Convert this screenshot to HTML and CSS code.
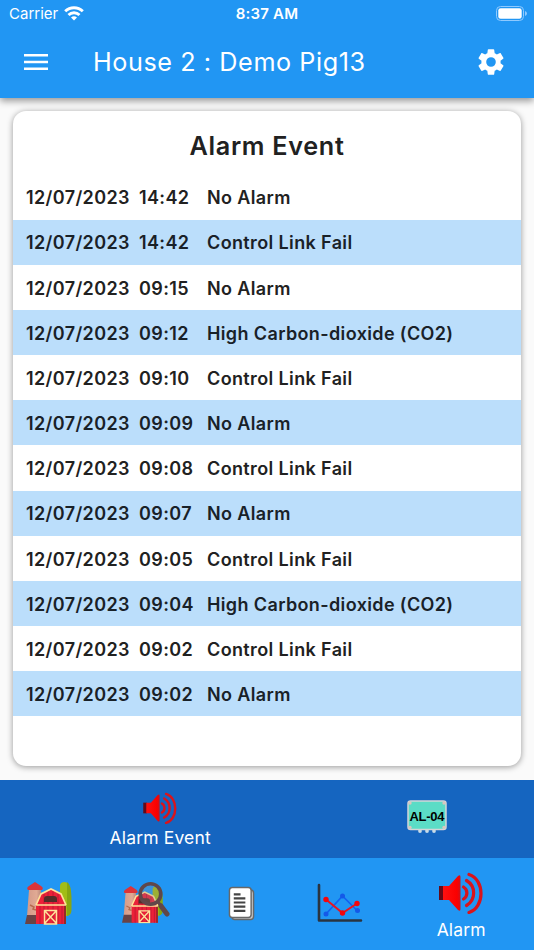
FILE: index.html
```html
<!DOCTYPE html>
<html lang="en">

<head>
    <meta charset="UTF-8">
    <title>Alarm Event</title>
    <link rel="stylesheet" href="styles.css">
</head>

<body>
    <!-- shared drawings -->
    <svg class="defs" width="0" height="0">
        <defs>
            <linearGradient id="red" x1="0" y1="0" x2="1" y2="0">
                <stop offset="0" stop-color="#ff1010" />
                <stop offset="0.8" stop-color="#fa0000" />
                <stop offset="1" stop-color="#d0101a" />
            </linearGradient>
            <linearGradient id="silo" x1="0" y1="0" x2="1" y2="0">
                <stop offset="0" stop-color="#d49a88" />
                <stop offset="0.6" stop-color="#e0aa94" />
                <stop offset="1" stop-color="#a87870" />
            </linearGradient>
            <symbol id="speaker" viewBox="0 0 44 42">
                <path d="M0 14h5v14H0z" fill="#650a18" />
                <path d="M4 14h6L19 4q2.500-2 2.500 1v32q0 3-2.500 1l-9-10H4z" fill="url(#red)" />
                <g fill="none" stroke="#d9141c" stroke-width="3.200" stroke-linecap="round">
                    <path d="M24.500 15a7 7 0 0 1 0 12" />
                    <path d="M27.500 8.500a14.500 14.500 0 0 1 0 25" />
                    <path d="M30 2.500c16 5 16 33 0 38" />
                </g>
            </symbol>
            <symbol id="farm" viewBox="0 0 48 44">
                <path d="M35 5q0-4 5-4 6 1 6 15v13q0 5-4 6h-4q-3 0-3-4z" fill="#a2bd16" />
                <path d="M42 1q4 2 4.500 15v13q0 5-4.500 6z" fill="#87a612" />
                <path d="M4 9h12l2 26H2z" fill="url(#silo)" />
                <path d="M5 24l4 2-1 2 3 1" fill="none" stroke="#b66a4d" stroke-width="1.500" />
                <path d="M2 34h11v9H0z" fill="#6a4345" />
                <path d="M3 9q-2-2 1-4l6-4 6 4q3 2 1 4z" fill="#dc3438" />
                <path d="M11 43V23l5-10 10-5 10 5 5 10v20z" fill="#eb2138" />
                <path d="M15 24v19M19 13v30M23 10v33M28 10v33M33 13v30M37 24v19" stroke="#c71934" stroke-width="1.200" />
                <path d="M39 24h2v19h-2z" fill="#922b27" />
                <path d="M19 21v-3q0-3 3-3h7q3 0 3 3v3z" fill="#542d29" />
                <path d="M11 24h30M11 24l5-11 10-5 10 5 5 11" fill="none" stroke="#ffe29a" stroke-width="1.700" />
                <path d="M19.500 29.500h12V43h-12zM19.500 29.500l12 13M31.500 29.500l-12 13" fill="none" stroke="#ffe29a" stroke-width="1.500" />
            </symbol>
        </defs>
    </svg>

    <header class="header">
        <div class="status-bar">
            <div class="carrier">
                <span>Carrier</span>
                <svg width="20" height="15" viewBox="0 0 20 15" fill="none" stroke="#fff" stroke-width="2.900">
                    <path d="M1.200 5.300a12.600 12.600 0 0 1 17.600 0" />
                    <path d="M4.500 9a7.900 7.900 0 0 1 11 0" />
                    <path d="M10 14.500l-3-3q3-2.300 6 0z" fill="#fff" stroke="none" />
                </svg>
            </div>
            <div class="clock">8:37 AM</div>
            <svg class="battery" width="32" height="15" viewBox="0 0 32 15">
                <rect x="0.500" y="0.500" width="27" height="14" rx="4" fill="none" stroke="#8fcaff" />
                <rect x="2.300" y="2.300" width="23.400" height="10.400" rx="2.300" fill="#fff" />
                <path d="M29 5q2 .7 2 2.500T29 10z" fill="#8fcaff" />
            </svg>
        </div>
        <div class="app-bar">
            <svg class="menu" width="24" height="16" viewBox="0 0 24 16" fill="#fff">
                <path d="M0 0h24v2.600H0zM0 6.700h24v2.600H0zM0 13.400h24V16H0z" />
            </svg>
            <h1>House 2 : Demo Pig13</h1>
            <svg class="gear" width="32" height="32" viewBox="0 0 24 24" fill="#fff">
                <path d="M19.140 12.940c.04-.3.060-.61.060-.94 0-.32-.02-.64-.07-.94l2.030-1.580c.18-.14.230-.41.120-.61l-1.920-3.320c-.12-.22-.37-.29-.59-.22l-2.390.96c-.5-.38-1.030-.7-1.620-.94l-.36-2.540c-.04-.24-.24-.41-.48-.41h-3.840c-.24 0-.43.17-.47.41l-.36 2.540c-.59.24-1.130.57-1.620.94l-2.390-.96c-.22-.08-.47 0-.59.22L2.740 8.870c-.12.210-.08.470.12.610l2.030 1.580c-.05.3-.09.630-.09.940s.020.640.070.940l-2.030 1.580c-.18.140-.23.410-.12.610l1.920 3.320c.12.220.37.290.59.220l2.390-.96c.5.380 1.030.7 1.620.940l.36 2.540c.05.240.24.410.48.410h3.840c.24 0 .44-.17.470-.41l.36-2.540c.59-.24 1.130-.56 1.620-.94l2.390.96c.22.080.47 0 .59-.22l1.920-3.320c.12-.22.070-.47-.12-.61l-2.010-1.580zM12 15.600A3.600 3.600 0 1 1 12 8.400a3.600 3.600 0 0 1 0 7.200z" />
            </svg>
        </div>
    </header>

    <main class="content">
        <div class="card">
            <h2>Alarm Event</h2>
            <ul class="events">
                <li><span>12/07/2023</span><span>14:42</span><span>No Alarm</span></li>
                <li><span>12/07/2023</span><span>14:42</span><span>Control Link Fail</span></li>
                <li><span>12/07/2023</span><span>09:15</span><span>No Alarm</span></li>
                <li><span>12/07/2023</span><span>09:12</span><span>High Carbon-dioxide (CO2)</span></li>
                <li><span>12/07/2023</span><span>09:10</span><span>Control Link Fail</span></li>
                <li><span>12/07/2023</span><span>09:09</span><span>No Alarm</span></li>
                <li><span>12/07/2023</span><span>09:08</span><span>Control Link Fail</span></li>
                <li><span>12/07/2023</span><span>09:07</span><span>No Alarm</span></li>
                <li><span>12/07/2023</span><span>09:05</span><span>Control Link Fail</span></li>
                <li><span>12/07/2023</span><span>09:04</span><span>High Carbon-dioxide (CO2)</span></li>
                <li><span>12/07/2023</span><span>09:02</span><span>Control Link Fail</span></li>
                <li><span>12/07/2023</span><span>09:02</span><span>No Alarm</span></li>
            </ul>
        </div>
    </main>

    <nav class="sub-nav">
        <a class="active">
            <svg width="34" height="32"><use href="#speaker" /></svg>
            <span>Alarm Event</span>
        </a>
        <a>
            <svg width="40" height="33" viewBox="0 0 40 33">
                <g fill="#c7dbe8">
                    <circle cx="13" cy="31" r="1.900" />
                    <circle cx="20" cy="31" r="1.900" />
                    <circle cx="27" cy="31" r="1.900" />
                </g>
                <rect x="1" y="1" width="38" height="28.500" rx="2.500" fill="#5bdcc6" stroke="#d3d5d7" stroke-width="1.500" />
                <g fill="#d8c6c0">
                    <circle cx="3" cy="3" r="1.700" />
                    <circle cx="37" cy="3" r="1.700" />
                    <circle cx="3" cy="27.500" r="1.700" />
                    <circle cx="37" cy="27.500" r="1.700" />
                </g>
                <text class="chip" x="20" y="21" text-anchor="middle" textLength="35">AL-04</text>
            </svg>
        </a>
    </nav>

    <nav class="bottom-nav">
        <a><svg width="48" height="44"><use href="#farm" /></svg></a>
        <a>
            <svg width="49" height="44" viewBox="0 0 49 44">
                <use href="#farm" x="1" y="4" width="42" height="38.500" />
                <circle cx="29.500" cy="13" r="10.300" fill="#8b8c91" fill-opacity="0.25" stroke="#60474a" stroke-width="3.600" />
                <path d="M37 21l4 5" stroke="#60474a" stroke-width="3" />
                <path d="M40 25l6 8" stroke="#60474a" stroke-width="5" stroke-linecap="round" />
            </svg>
        </a>
        <a>
            <svg class="report" width="27" height="35" viewBox="0 0 28 36">
                <rect x="4" y="4" width="22.500" height="30.500" rx="3" fill="#c9c9c9" stroke="#686868" stroke-width="1.500" />
                <rect x="1.500" y="1.500" width="22.500" height="31" rx="3" fill="#fff" stroke="#686868" stroke-width="1.500" />
                <path d="M6 8.500h7M6 12.700h12M6 17h12M6 21.300h12M6 25.600h12" stroke="#444" stroke-width="2.200" />
            </svg>
        </a>
        <a>
            <svg width="46" height="40" viewBox="0 0 46 40" fill="none">
                <path d="M2 2v35.500h42" stroke="#2a3440" stroke-width="2.600" stroke-linecap="round" stroke-linejoin="round" />
                <path d="M9 31l16.500-18L40 27.500" stroke="#1261f0" stroke-width="1.700" />
                <path d="M9 16.500L25.500 30 40 20.500" stroke="#e9141f" stroke-width="2" />
                <g fill="#1459e8">
                    <circle cx="9" cy="31" r="2.500" />
                    <circle cx="25.500" cy="13" r="2.500" />
                    <circle cx="40.500" cy="27.500" r="2.500" />
                </g>
                <g fill="#f5050c">
                    <circle cx="9" cy="16.500" r="2.700" />
                    <circle cx="25.500" cy="30" r="2.700" />
                    <circle cx="40" cy="20.500" r="2.700" />
                </g>
            </svg>
        </a>
        <a class="active">
            <svg width="44" height="42"><use href="#speaker" /></svg>
            <span>Alarm</span>
        </a>
    </nav>
</body>

</html>
```
FILE: styles.css
```css
* {
    box-sizing: border-box;
}

body {
    display: flex;
    flex-direction: column;
    height: 950px;
    margin: 0;
    overflow: hidden;
    background-color: #fafafa;
    font-family: Inter, "Liberation Sans", sans-serif;
}

svg {
    display: block;
    flex-shrink: 0;
}

.defs {
    position: absolute;
}

.header {
    height: 98px;
    background-color: #2196f3;
    color: #fff;
    box-shadow: 0 3px 7px rgba(0, 0, 0, 0.4);
}

.status-bar {
    display: grid;
    grid-template-columns: 1fr auto 1fr;
    align-items: center;
    height: 28px;
    padding: 0 6px 1px 9px;
    font-size: 15px;
}

.carrier {
    display: flex;
    align-items: center;
    gap: 6px;
}

.clock {
    margin-right: 3px;
    font-weight: 600;
    letter-spacing: 0.2px;
}

.battery {
    justify-self: end;
}

.app-bar {
    display: flex;
    align-items: center;
    height: 68px;
    padding: 0 27px 0 24px;
}

.app-bar h1 {
    flex: 1;
    margin: 0 0 0 45px;
    font-size: 25.200px;
    font-weight: 400;
    letter-spacing: 0.58px;
    white-space: nowrap;
}

.content {
    flex: 1;
    padding: 13px;
}

.card {
    height: 655px;
    padding-top: 16px;
    border-radius: 13px;
    background-color: #fff;
    color: #212121;
    box-shadow: 0 1px 6px rgba(0, 0, 0, 0.4);
}

.card h2 {
    height: 47.500px;
    margin: 0;
    line-height: 38px;
    font-size: 25.200px;
    font-weight: 600;
    letter-spacing: 0.7px;
    text-align: center;
}

.events {
    margin: 0;
    padding: 0;
    list-style: none;
}

.events li {
    display: grid;
    grid-template-columns: 113px 68px 1fr;
    align-items: center;
    height: 45.170px;
    padding: 1.500px 13px 0;
    font-size: 18px;
    font-weight: 600;
    letter-spacing: 0.37px;
    white-space: nowrap;
}

.events li:nth-child(even) {
    background-color: #bbdefb;
    color: #192128;
}

.sub-nav,
.bottom-nav {
    display: flex;
    color: #fff;
    font-size: 17.500px;
    letter-spacing: 0.15px;
}

.sub-nav a,
.bottom-nav a {
    display: flex;
    flex: 2;
    flex-direction: column;
    align-items: center;
    justify-content: center;
}

.sub-nav .active,
.bottom-nav .active {
    flex: 3;
}

.sub-nav {
    height: 78.500px;
    background-color: #1565c0;
}

.sub-nav .active {
    gap: 3px;
    padding-top: 3px;
}

.sub-nav a:last-child {
    padding-bottom: 4px;
}

.bottom-nav {
    height: 92px;
    background-color: #2196f3;
}

.bottom-nav a:not(.active) {
    padding-bottom: 2px;
}

.bottom-nav .active {
    gap: 5px;
    padding-top: 3px;
}

.report {
    margin-right: 2px;
}

.chip {
    font-family: "Liberation Sans", sans-serif;
    font-size: 13px;
    font-weight: 700;
    letter-spacing: 0;
}
```
